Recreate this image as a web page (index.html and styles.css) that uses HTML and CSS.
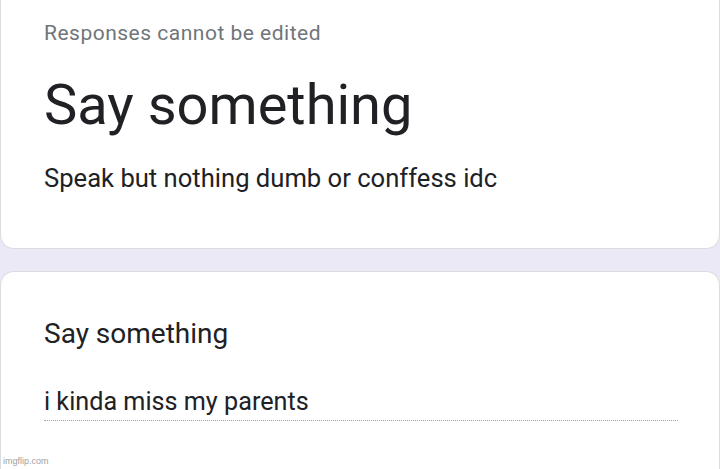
FILE: index.html
```html
<!DOCTYPE html>
<html>
<head>
<meta charset="utf-8">
<link rel="stylesheet" href="styles.css">
</head>
<body>
<div class="page">
  <section class="card card-top">
    <div class="note">Responses cannot be edited</div>
    <h1 class="title">Say something</h1>
    <p class="desc">Speak but nothing dumb or conffess idc</p>
  </section>
  <section class="card card-q">
    <div class="qtitle">Say something</div>
    <div class="answer">i kinda miss my parents</div>
  </section>
  <div class="watermark">imgflip.com</div>
</div>
</body>
</html>
```

FILE: styles.css
```css
html, body {
  margin: 0;
  padding: 0;
}
body {
  width: 720px;
  height: 469px;
  overflow: hidden;
  background: #ece9f7;
  font-family: Roboto, "Liberation Sans", sans-serif;
  color: #202124;
}
.page {
  position: relative;
  height: 469px;
  display: flex;
  flex-direction: column;
  gap: 22px;
}
.card {
  background: #fff;
  border: 1px solid #dadce0;
  width: 720px;
  box-sizing: border-box;
  padding: 0 43px;
}
.card-top {
  border-top: none;
  border-radius: 0 0 14px 14px;
  height: 249px;
  padding-top: 21px;
}
.card-q {
  border-bottom: none;
  border-radius: 14px 14px 0 0;
  flex: 1;
  padding-top: 44px;
}
.note {
  font-size: 21px;
  color: #70757a;
  letter-spacing: 0.5px;
  line-height: 24px;
}
.title {
  font-size: 56px;
  font-weight: 400;
  line-height: 64px;
  margin: 28px 0 0 0;
}
.desc {
  font-size: 25.6px;
  line-height: 32px;
  margin: 25px 0 0 0;
}
.qtitle {
  font-size: 28px;
  line-height: 36px;
}
.answer {
  font-size: 25.2px;
  line-height: 32px;
  margin-top: 34px;
  width: 634px;
  border-bottom: 1px dotted #9aa0a6;
  padding-bottom: 2px;
}
.watermark {
  position: absolute;
  left: 3px;
  bottom: 3px;
  font-size: 9px;
  color: #a0a0a0;
  font-family: "Liberation Sans", sans-serif;
}
```
